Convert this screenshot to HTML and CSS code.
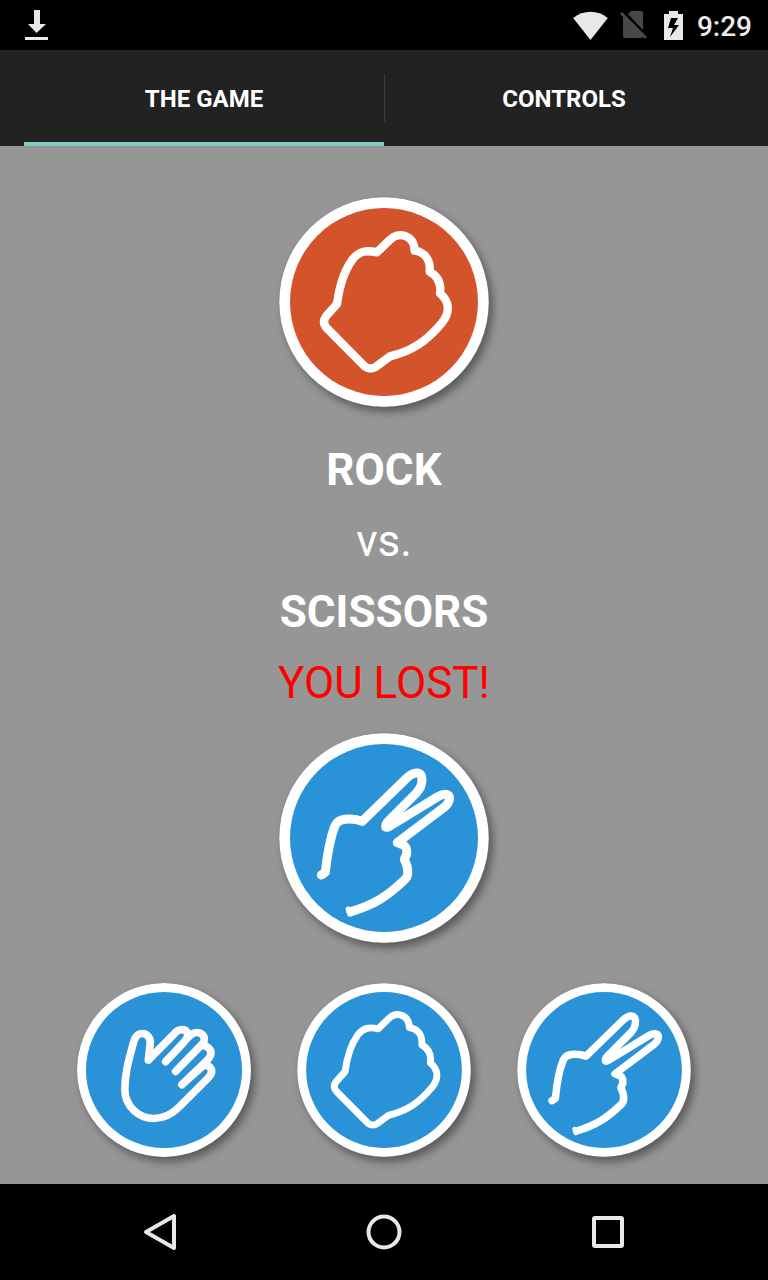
FILE: index.html
```html
<!DOCTYPE html>
<html lang="en">
<head>
<meta charset="utf-8">
<meta name="viewport" content="width=device-width, initial-scale=1">
<title>Rock Paper Scissors</title>
<link rel="stylesheet" href="styles.css">
</head>
<body>
<svg class="sprite" aria-hidden="true">
  <symbol id="rock" viewBox="27 32 630 630">
    <circle class="ring" cx="342" cy="347" r="314"/>
    <circle class="disc" cx="342" cy="347" r="282"/>
    <path class="line" d="M321 198L360 160C384 136 431 143 434 193C466 198 482 222 479 256C504 270 514 292 510 321C541 347 539 379 517 408C470 465 425 495 360 510L318 541Q301 552 284 540L170 425Q155 408 168 390L201 353C208 300 225 250 247 220C268 193 290 191 321 198Z"/>
  </symbol>
  <symbol id="scissors" viewBox="27 26 630 630">
    <circle class="ring" cx="342" cy="341" r="314"/>
    <circle class="disc" cx="342" cy="341" r="282"/>
    <path class="line thick" d="M154 452L166 444C170 400 182 335 195 304Q203 288 225 285C245 283 262 285 277 291L408 163C431 140 457 139 456 166C455 186 450 193 438 207L357 288C344 302 343 315 358 306L505 216C528 203 545 211 536 232Q533 240 525 247L382 355L402 363Q412 370 410 390L403 405L411 425C415 445 415 455 405 465C350 518 310 542 243 562"/>
    <path class="line tip" d="M235 555L240 569M377 356L394 361"/>
  </symbol>
  <symbol id="paper" viewBox="-118 -111 524 524">
    <circle class="ring" cx="144" cy="151" r="262"/>
    <circle class="disc" cx="144" cy="151" r="235"/>
    <path class="line hand" d="M97 121L102 75C106 55 94 41 79 41C64 41 57 50 53 65C38 120 26 160 26 210C26 262 70 297 113 297C145 297 170 282 190 262L275 177C290 162 289 150 282 142Q270 130 255 144L198 195M97 121L173 44C190 22 212 28 215 42C217 52 212 58 205 66L149 126M211 58L225 45C240 33 258 38 264 50C268 60 262 70 255 77L179 155M262 78C276 78 290 92 284 107Q282 113 272 124L198 195"/>
  </symbol>
</svg>

<header class="status">
  <svg class="download" viewBox="0 0 23 31" aria-label="Download complete"><path d="M9 0h6v14h6l-9.500 9L3 14h6zM0 27h23v3H0z"/></svg>
  <div class="indicators">
    <svg class="wifi" viewBox="38 31 104 87" aria-label="Wi-Fi"><path d="M38 52C70 27 110 27 142 52L90 118Z"/></svg>
    <svg class="sim" viewBox="0 0 27 29" aria-label="No SIM card"><path d="M8 3l3-3h10q2 0 2 2v17zM3 6l20 20q-1 1-2 1H5q-2 0-2-2zM0 3l2-2 25 25-2 2z"/></svg>
    <svg class="battery" viewBox="0 0 19 29" aria-label="Charging"><path fill-rule="evenodd" d="M5 0h9v3h5v26H0V3h5zM7 7L4 17h5L6 26l9-12h-5l4-7z"/></svg>
    <time class="clock">9:29</time>
  </div>
</header>

<div class="tabs" role="tablist">
  <button class="tab active" role="tab" aria-selected="true">THE GAME</button>
  <button class="tab" role="tab" aria-selected="false">CONTROLS</button>
</div>

<main class="game">
  <svg class="badge lost" role="img" aria-label="Rock"><use href="#rock"/></svg>
  <div class="result">
    <strong>ROCK</strong>
    <span>vs.</span>
    <strong>SCISSORS</strong>
    <span class="outcome">YOU LOST!</span>
  </div>
  <svg class="badge" role="img" aria-label="Scissors"><use href="#scissors"/></svg>
  <div class="choices">
    <button class="choice" aria-label="Play paper"><svg class="badge"><use href="#paper"/></svg></button>
    <button class="choice" aria-label="Play rock"><svg class="badge"><use href="#rock"/></svg></button>
    <button class="choice" aria-label="Play scissors"><svg class="badge"><use href="#scissors"/></svg></button>
  </div>
</main>

<nav class="system">
  <button aria-label="Back"><svg viewBox="0 0 36 40"><path d="M32 4v32L4 20z"/></svg></button>
  <button aria-label="Home"><svg viewBox="0 0 36 40"><circle cx="18" cy="20" r="15.500"/></svg></button>
  <button aria-label="Recent apps"><svg viewBox="0 0 36 40"><rect x="4" y="6" width="28" height="28" rx="1"/></svg></button>
</nav>
</body>
</html>
```
FILE: styles.css
```css
* {
  box-sizing: border-box;
}

body {
  margin: 0;
  min-height: 100vh;
  display: flex;
  flex-direction: column;
  background: #969696;
  color: #fff;
  font-family: Roboto, "Liberation Sans", sans-serif;
}

button {
  margin: 0;
  padding: 0;
  border: 0;
  background: none;
  color: inherit;
  font: inherit;
  cursor: pointer;
}

svg {
  display: block;
}

.sprite {
  position: absolute;
  width: 0;
  height: 0;
}

.status {
  display: flex;
  justify-content: space-between;
  align-items: center;
  height: 50px;
  padding: 0 16px 0 25px;
  background: #000;
  fill: #e8e8e8;
}

.download {
  width: 23px;
  height: 31px;
}

.indicators {
  display: flex;
  align-items: center;
}

.wifi {
  width: 35px;
  height: 29px;
  margin-right: 12px;
}

.sim {
  width: 27px;
  height: 29px;
  margin-right: 17px;
  fill: #484848;
}

.battery {
  width: 19px;
  height: 29px;
  margin-right: 14px;
}

.clock {
  padding-top: 3px;
  color: #ececec;
  font-size: 28px;
  font-weight: 500;
  line-height: 32px;
}

.tabs {
  display: flex;
  height: 96px;
  padding: 0 24px;
  background: #222;
}

.tab {
  position: relative;
  flex: 1;
  border-top: 6px solid transparent;
  border-bottom: 4px solid transparent;
  font-size: 24px;
  font-weight: 700;
}

.tab.active {
  border-top-color: #222;
  border-bottom-color: #80cbc4;
}

.tab + .tab::before {
  content: "";
  position: absolute;
  top: 18px;
  bottom: 20px;
  left: 0;
  width: 1px;
  background: #3c3c3c;
}

.game {
  flex: 1;
  display: flex;
  flex-direction: column;
  align-items: center;
  padding: 51px 24px 27px;
}

.badge {
  width: 210px;
  height: 210px;
  border-radius: 50%;
  box-shadow: 4px 5px 9px rgba(0, 0, 0, 0.4);
  color: #2a92d6;
}

.badge.lost {
  color: #d3532a;
}

.ring {
  fill: #fff;
}

.disc {
  fill: currentColor;
}

.line {
  fill: none;
  stroke: #fff;
  stroke-width: 25px;
  stroke-linecap: round;
  stroke-linejoin: round;
}

.line.thick {
  stroke-width: 27px;
}

.line.tip {
  stroke-width: 16px;
}

.line.hand {
  stroke: #fffafb;
  stroke-width: 23px;
}

.result {
  display: flex;
  flex-direction: column;
  align-items: center;
  padding: 28px 0 14px;
  font-size: 44px;
  line-height: 71px;
}

.outcome {
  color: #f00;
}

.choices {
  display: flex;
  gap: 46px;
  padding-top: 40px;
}

.choice,
.choice .badge {
  width: 174px;
  height: 174px;
}

.choice {
  border-radius: 50%;
}

.system {
  display: grid;
  grid-template-columns: repeat(3, 1fr);
  height: 96px;
  padding: 0 48px;
  background: #000;
}

.system svg {
  width: 36px;
  height: 40px;
  margin: auto;
  fill: none;
  stroke: #e8e8e8;
  stroke-width: 4px;
  stroke-linejoin: round;
}
```
